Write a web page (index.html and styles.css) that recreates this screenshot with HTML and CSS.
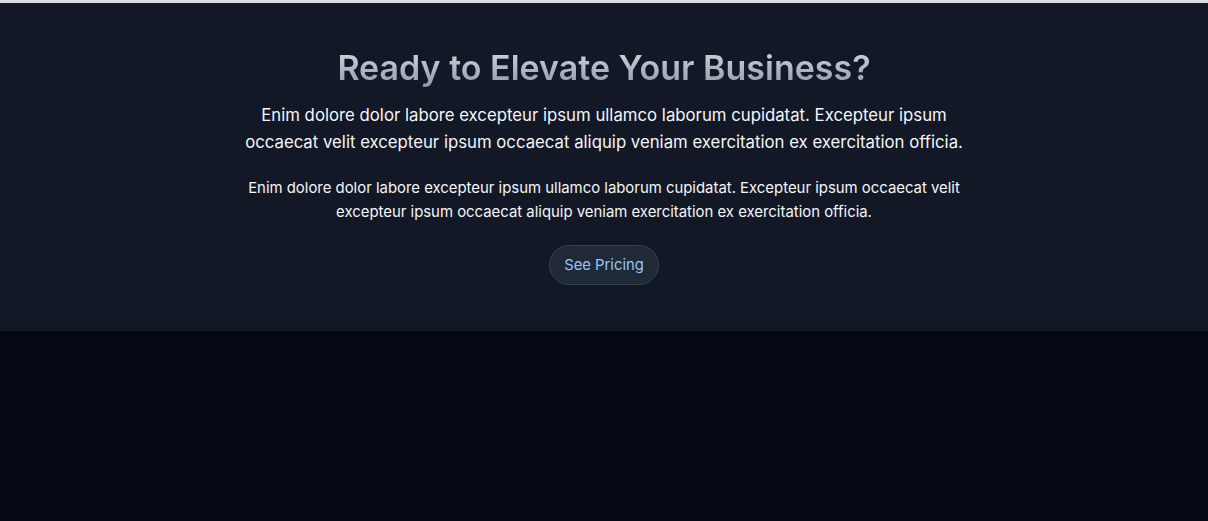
FILE: index.html
```html
<!DOCTYPE html>
<html lang="en">
<head>
<meta charset="utf-8">
<title>Ready to Elevate Your Business?</title>
<link rel="stylesheet" href="styles.css">
</head>
<body>
<div class="topline"></div>
<section class="cta">
  <h2 class="cta-title">Ready to Elevate Your Business?</h2>
  <p class="cta-lead">Enim dolore dolor labore excepteur ipsum ullamco laborum cupidatat. Excepteur ipsum occaecat velit excepteur ipsum occaecat aliquip veniam exercitation ex exercitation officia.</p>
  <p class="cta-text">Enim dolore dolor labore excepteur ipsum ullamco laborum cupidatat. Excepteur ipsum occaecat velit excepteur ipsum occaecat aliquip veniam exercitation ex exercitation officia.</p>
  <a class="cta-btn" href="#">See Pricing</a>
</section>
<div class="rest"></div>
</body>
</html>
```
FILE: styles.css
```css
html, body {
  margin: 0;
  padding: 0;
}
body {
  background: #050812;
  font-family: Inter, "Noto Sans", sans-serif;
  min-height: 521px;
}
.topline {
  height: 3px;
  background: #dedfe1;
}
.cta {
  background: #121826;
  padding: 45px 16px 46px;
  display: flex;
  flex-direction: column;
  align-items: center;
  text-align: center;
}
.cta-title {
  margin: 0;
  font-size: 34px;
  line-height: 40px;
  font-weight: 600;
  background: linear-gradient(to bottom, #d4d8de, #8f97a7);
  -webkit-background-clip: text;
  background-clip: text;
  color: transparent;
}
.cta-lead {
  margin: 14px 0 0;
  max-width: 740px;
  font-size: 16.75px;
  line-height: 27px;
  color: #f5f6f8;
}
.cta-text {
  margin: 20px 0 0;
  max-width: 740px;
  font-size: 14.9px;
  line-height: 24px;
  color: #f5f6f8;
}
.cta-btn {
  margin-top: 21px;
  display: inline-flex;
  align-items: center;
  height: 38px;
  padding: 0 14.5px;
  border: 1px solid #374151;
  border-radius: 999px;
  background: #1f2937;
  color: #93c5fd;
  font-size: 14.8px;
  text-decoration: none;
}
```
